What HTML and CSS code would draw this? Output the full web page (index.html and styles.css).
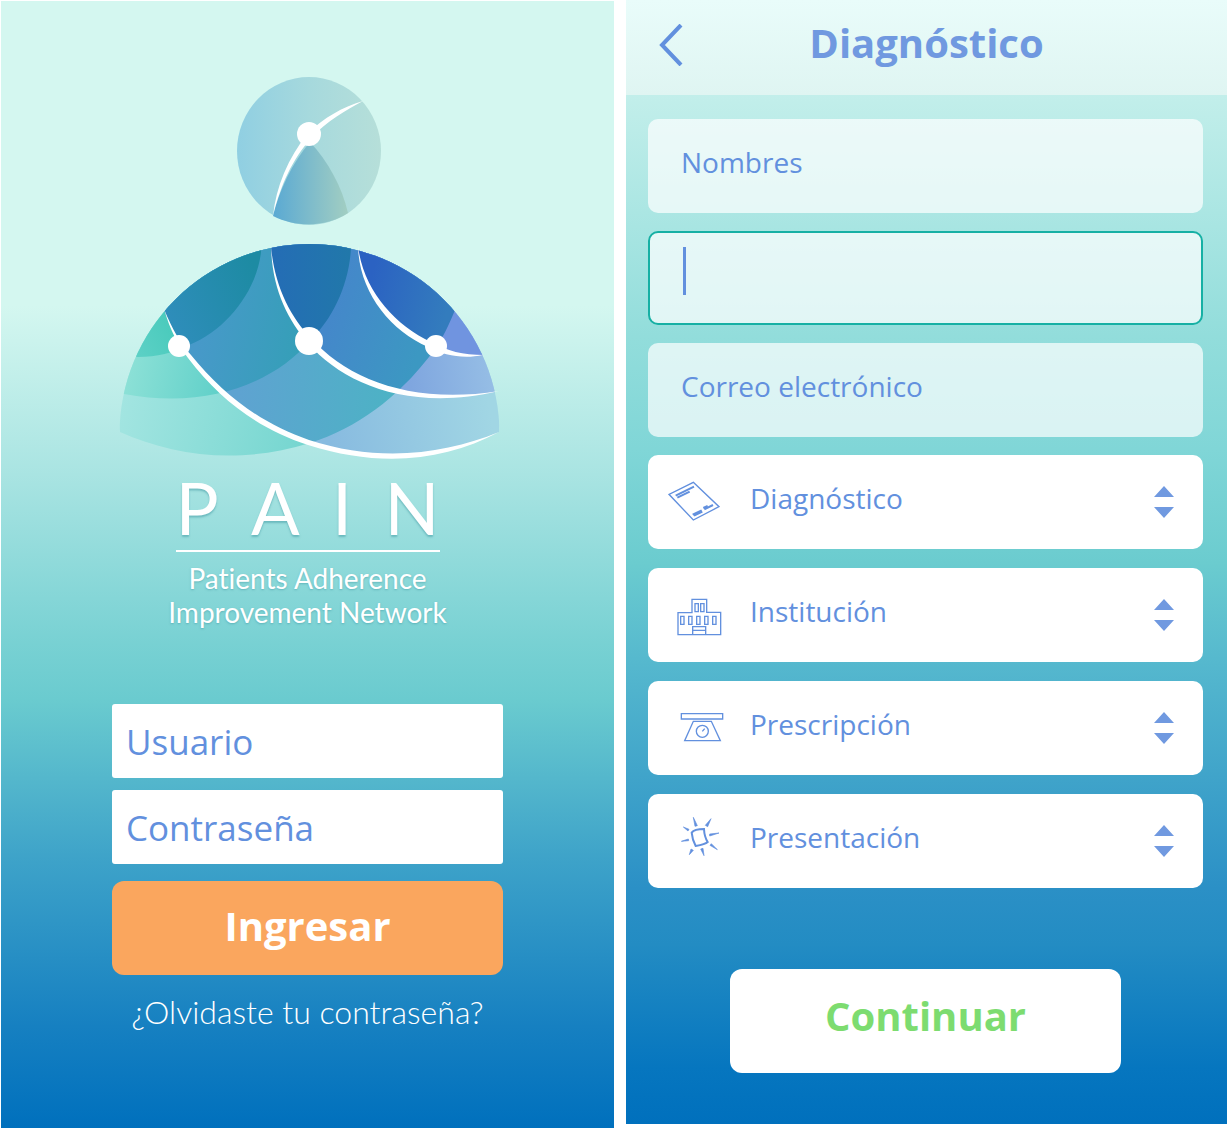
FILE: index.html
```html
<!DOCTYPE html>
<html lang="es">
<head>
<meta charset="utf-8">
<meta name="viewport" content="width=device-width, initial-scale=1">
<title>PAIN</title>
<link rel="stylesheet" href="styles.css">
</head>
<body>
<div class="screens">
  <main class="screen login">
    <svg class="logo" viewBox="110 70 400 395" aria-hidden="true">
      <defs>
        <linearGradient id="head"><stop offset="0" stop-color="#90cfe2"/><stop offset=".5" stop-color="#a6d9dd"/><stop offset="1" stop-color="#b6dfd9"/></linearGradient>
        <linearGradient id="neck"><stop offset="0" stop-color="#5aa9d3"/><stop offset="1" stop-color="#a2cec2"/></linearGradient>
        <linearGradient id="c03" gradientUnits="userSpaceOnUse" x1="138" y1="350" x2="180" y2="330"><stop offset="0" stop-color="#5bd0c5"/><stop offset="1" stop-color="#48cabb"/></linearGradient>
        <linearGradient id="c02" gradientUnits="userSpaceOnUse" x1="130" y1="370" x2="220" y2="390"><stop offset="0" stop-color="#8be0d6"/><stop offset="1" stop-color="#60d0c9"/></linearGradient>
        <linearGradient id="c01" gradientUnits="userSpaceOnUse" x1="120" y1="400" x2="300" y2="450"><stop offset="0" stop-color="#a3e5e1"/><stop offset="1" stop-color="#76d6d0"/></linearGradient>
        <linearGradient id="c13" gradientUnits="userSpaceOnUse" x1="170" y1="320" x2="260" y2="280"><stop offset="0" stop-color="#2e8dba"/><stop offset="1" stop-color="#1d8ba3"/></linearGradient>
        <linearGradient id="c12" gradientUnits="userSpaceOnUse" x1="200" y1="330" x2="300" y2="350"><stop offset="0" stop-color="#4799c9"/><stop offset="1" stop-color="#359fb8"/></linearGradient>
        <linearGradient id="c11" gradientUnits="userSpaceOnUse" x1="240" y1="390" x2="390" y2="400"><stop offset="0" stop-color="#5ea3d1"/><stop offset="1" stop-color="#4db2c5"/></linearGradient>
        <linearGradient id="c10" gradientUnits="userSpaceOnUse" x1="330" y1="440" x2="490" y2="410"><stop offset="0" stop-color="#88bbe0"/><stop offset="1" stop-color="#a1d6e4"/></linearGradient>
        <linearGradient id="c22" gradientUnits="userSpaceOnUse" x1="275" y1="280" x2="350" y2="280"><stop offset="0" stop-color="#246db5"/><stop offset="1" stop-color="#2178aa"/></linearGradient>
        <linearGradient id="c21" gradientUnits="userSpaceOnUse" x1="330" y1="320" x2="420" y2="350"><stop offset="0" stop-color="#4488ca"/><stop offset="1" stop-color="#3c98c2"/></linearGradient>
        <linearGradient id="c20" gradientUnits="userSpaceOnUse" x1="410" y1="380" x2="490" y2="370"><stop offset="0" stop-color="#7fa6df"/><stop offset="1" stop-color="#95bde5"/></linearGradient>
        <linearGradient id="c31" gradientUnits="userSpaceOnUse" x1="370" y1="280" x2="450" y2="300"><stop offset="0" stop-color="#2b62c2"/><stop offset="1" stop-color="#337cbd"/></linearGradient>
        <clipPath id="dome"><circle cx="309.5" cy="434" r="190"/></clipPath>
        <clipPath id="s1"><path d="M164 310C172 330 180 345 190 357C222 398 262 428 309 443C380 467 445 457 499 432L510 200H110Z"/></clipPath>
        <clipPath id="s2"><path d="M271 240V248C273 285 288 318 309 341C345 382 410 408 495 392L510 388V240Z"/></clipPath>
        <clipPath id="s3"><path d="M358 240V248C362 290 392 328 430 345C446 353 462 357 481 356L510 352V240Z"/></clipPath>
        <path id="r1" d="M459 300L455 310C447 330 439 345 429 357C397 398 357 428 310 443C239 465 174 456 120 432L100 240H459Z"/>
        <path id="r2" d="M351 240V248C349 285 333 318 310 341C274 382 209 410 124 394L100 388V240Z"/>
        <path id="r3" d="M262 240L261 252C257 290 227 330 189 345C173 353 157 357 138 357L100 352V240Z"/>
      </defs>
      <ellipse cx="309" cy="151" rx="72" ry="74" fill="url(#head)"/>
      <path d="M273 216C279 191 292 163 310 142C328 161 342 187 348 213C326 227 297 228 273 216Z" fill="url(#neck)"/>
      <path d="M273 216C276 187 288 158 308 133C324 118 342 107 363 101C346 110 327 121 312 137C292 160 281 184 273 216Z" fill="#fff"/>
      <circle cx="309" cy="134" r="12" fill="#fff"/>
      <g clip-path="url(#dome)">
        <use href="#r1" fill="url(#c01)"/><use href="#r2" fill="url(#c02)"/><use href="#r3" fill="url(#c03)"/>
        <g clip-path="url(#s1)"><path d="M110 240h400v225H110z" fill="url(#c10)"/><use href="#r1" fill="url(#c11)"/><use href="#r2" fill="url(#c12)"/><use href="#r3" fill="url(#c13)"/></g>
        <g clip-path="url(#s2)"><path d="M110 240h400v225H110z" fill="url(#c20)"/><use href="#r1" fill="url(#c21)"/><use href="#r2" fill="url(#c22)"/></g>
        <g clip-path="url(#s3)"><path d="M110 240h400v225H110z" fill="#7094e0"/><use href="#r1" fill="url(#c31)"/></g>
      </g>
      <g fill="#fff">
        <path d="M164 309C172 329 181 344 191 355C224 396 264 425 309 440C380 463 445 454 499 432C445 461 380 468 308 445C260 430 220 400 188 358C178 345 170 330 164 309Z"/>
        <path d="M271 246C274 284 290 317 311 338C347 379 412 405 499 391C410 412 343 384 308 343C287 319 272 288 271 246Z"/>
        <path d="M358 246C363 289 394 325 431 342C447 351 463 355 484 355C463 359 445 356 428 347C389 330 359 291 358 246Z"/>
        <circle cx="179" cy="346" r="11"/><circle cx="309" cy="341" r="14"/><circle cx="436" cy="346" r="11"/>
      </g>
    </svg>
    <h1 class="brand"><span>P</span><span>A</span><span>I</span><span>N</span></h1>
    <p class="tagline">Patients Adherence<br>Improvement Network</p>
    <form class="login-form">
      <input class="box" type="text" placeholder="Usuario" aria-label="Usuario">
      <input class="box" type="password" placeholder="Contraseña" aria-label="Contraseña">
      <button class="enter" type="button">Ingresar</button>
      <a class="forgot" href="#">¿Olvidaste tu contraseña?</a>
    </form>
  </main>

  <section class="screen diagnosis">
    <header class="bar">
      <button class="back" type="button" aria-label="Volver"><svg viewBox="0 0 24 42"><path d="M22 1L3 21L22 41"/></svg></button>
      <h2>Diagnóstico</h2>
    </header>
    <form class="fields">
      <div class="card soft"><input type="text" placeholder="Nombres" aria-label="Nombres"></div>
      <div class="card active"><span class="caret"></span><input type="text" aria-label="Apellidos"></div>
      <div class="card soft"><input type="email" placeholder="Correo electrónico" aria-label="Correo electrónico"></div>
      <div class="choices">
        <div class="card">
          <svg class="icon" viewBox="24 15 306 282"><path d="M160 97L237 170L160 210L87 133Z"/><path class="bold" d="M107 137L162 110M112 143L149 125M158 194L185 181M162 197L187 185M190 174L203 168M193 178L219 165"/></svg>
          <select aria-label="Diagnóstico"><option>Diagnóstico</option></select>
          <svg class="arrows" viewBox="0 0 20 32"><path d="M10 0L20 11H0ZM0 21H20L10 32Z"/></svg>
        </div>
        <div class="card">
          <svg class="icon" viewBox="24 354 306 282"><path d="M114 554V488H156V448H200V487H242V554ZM165 461H175V485H165ZM182 461H192V485H182ZM122 499H132V523H122ZM146 499H156V523H146ZM170 499H180V523H170ZM194 499H204V523H194ZM218 499H228V523H218ZM158 554V530H197V554M158 541H197"/></svg>
          <select aria-label="Institución"><option>Institución</option></select>
          <svg class="arrows" viewBox="0 0 20 32"><path d="M10 0L20 11H0ZM0 21H20L10 32Z"/></svg>
        </div>
        <div class="card">
          <svg class="icon" viewBox="24 33 306 282"><path d="M124 131H248V147H124ZM160 154H214L241 212H134ZM187 184L194 176"/><circle cx="187" cy="184" r="18"/></svg>
          <select aria-label="Prescripción"><option>Prescripción</option></select>
          <svg class="arrows" viewBox="0 0 20 32"><path d="M10 0L20 11H0ZM0 21H20L10 32Z"/></svg>
        </div>
        <div class="card">
          <svg class="icon" viewBox="24 372 306 282"><path class="ring" d="M155 488Q163 477 192 477Q193 500 203 516Q196 523 167 528Q157 510 155 488Z"/><path class="ray" d="M160 442L172 467L165 469ZM213 446L203 470L196 466ZM237 489L209 498L209 492ZM232 539L210 526L214 521ZM192 557L182 537L189 535ZM148 554L153 537L160 541ZM124 514L145 507L146 512ZM130 471L147 478L144 483Z"/></svg>
          <select aria-label="Presentación"><option>Presentación</option></select>
          <svg class="arrows" viewBox="0 0 20 32"><path d="M10 0L20 11H0ZM0 21H20L10 32Z"/></svg>
        </div>
      </div>
      <button class="continue" type="button">Continuar</button>
    </form>
  </section>
</div>
</body>
</html>
```
FILE: styles.css
```css
* {
  box-sizing: border-box;
}

body {
  margin: 0;
  background: #fff;
  font-family: "Open Sans", "Noto Sans", sans-serif;
  color: #6290de;
}

.screens {
  display: grid;
  grid-template-columns: 613fr 601fr;
  gap: 12px;
  align-items: start;
  padding: 0 1px;
}

.screen {
  display: flex;
  flex-direction: column;
}

input,
select,
button {
  font: inherit;
  color: inherit;
  border: 0;
  margin: 0;
  padding: 0;
  background: none;
  outline: 0;
}

input::placeholder {
  color: #6290de;
  opacity: 1;
}

/* Login */
.login {
  align-items: center;
  margin-top: 1px;
  padding: 69px 24px 95px;
  background: linear-gradient(#d4f7f0 27%, #a9e4e2 42%, #78d1d3 57%, #6acbcf 62%, #3ea3c9 76%, #1680c1 91%, #0070bd);
}

.logo {
  width: 400px;
  max-width: 100%;
  margin-left: 5px;
}

.brand {
  display: flex;
  justify-content: space-between;
  width: 264px;
  margin: 2px 0 0;
  padding-bottom: 3px;
  border-bottom: 2px solid #fff;
  font: 400 72px/80px Lato, sans-serif;
  color: #fff;
  text-shadow: 0 2px 2px rgba(60, 150, 160, .5);
}

.tagline {
  margin: 9px 0 0;
  font: 400 28px/34px Lato, sans-serif;
  font-variant-ligatures: none;
  color: #fff;
  text-align: center;
  text-shadow: 0 1px 2px rgba(60, 150, 160, .5);
}

.login-form {
  display: flex;
  flex-direction: column;
  gap: 12px;
  width: 100%;
  max-width: 391px;
  margin-top: 75px;
}

.box {
  width: 100%;
  height: 74px;
  padding: 0 14px;
  border-radius: 3px;
  background: #fff;
  font-size: 35px;
}

.enter {
  height: 94px;
  margin-top: 5px;
  padding-bottom: 6px;
  border-radius: 12px;
  background: #faa65e;
  color: #fff;
  font-size: 40px;
  font-weight: 700;
}

.forgot {
  margin-top: 4px;
  color: #fff;
  font: 300 32px/42px Lato, sans-serif;
  text-align: center;
  text-decoration: none;
}

/* Diagnosis form */
.diagnosis {
  background: linear-gradient(#d4f7f0, #c1eeea 9%, #92dddb 30%, #80d6d7 40%, #6bcccf 50%, #55b8ce 59%, #2b90c6 79%, #238cc3 84%, #0676bf 95%, #0070bd);
}

.bar {
  display: grid;
  grid-template-columns: 58px 1fr 58px;
  align-items: center;
  height: 95px;
  padding-bottom: 6px;
  background: linear-gradient(#e9fcfa, #dff5f2);
}

.bar h2 {
  margin: 0;
  padding-bottom: 4px;
  text-align: center;
  font-size: 40px;
  line-height: 56px;
  color: #7099e0;
}

.back {
  display: flex;
  padding-left: 33px;
}

.back svg {
  flex: none;
  width: 24px;
  height: 42px;
  fill: none;
  stroke: #6290de;
  stroke-width: 4;
}

.fields {
  display: flex;
  flex-direction: column;
  gap: 18px;
  padding: 24px 24px 51px 22px;
}

.card {
  display: flex;
  align-items: center;
  height: 94px;
  border-radius: 10px;
  background: #fff;
  font-size: 28px;
}

.card input,
.card select {
  flex: 1;
  min-width: 0;
  height: 100%;
  padding-bottom: 8px;
  appearance: none;
}

.soft {
  padding-left: 33px;
  background: rgba(255, 255, 255, .7);
}

.active {
  align-items: flex-start;
  padding: 14px 33px;
  border: 2px solid #16b0a4;
  background: rgba(255, 255, 255, .72);
}

.caret {
  width: 3px;
  height: 48px;
  background: #6290de;
}

.choices {
  display: flex;
  flex-direction: column;
  gap: 19px;
}

.icon {
  flex: none;
  width: 102px;
  height: 94px;
  fill: none;
  stroke: #6290de;
  stroke-width: 4;
}

.icon .bold {
  stroke-width: 6;
}

.icon .ring {
  stroke-width: 6;
}

.icon .ray {
  fill: #6290de;
  stroke-width: 2;
}

.arrows {
  flex: none;
  width: 20px;
  height: 32px;
  margin-right: 29px;
  fill: #7099e0;
  pointer-events: none;
}

.continue {
  align-self: center;
  width: 100%;
  max-width: 391px;
  height: 104px;
  margin-top: 63px;
  padding-bottom: 12px;
  border-radius: 12px;
  background: #fff;
  color: #7ddc70;
  font-size: 40px;
  font-weight: 700;
}
```
